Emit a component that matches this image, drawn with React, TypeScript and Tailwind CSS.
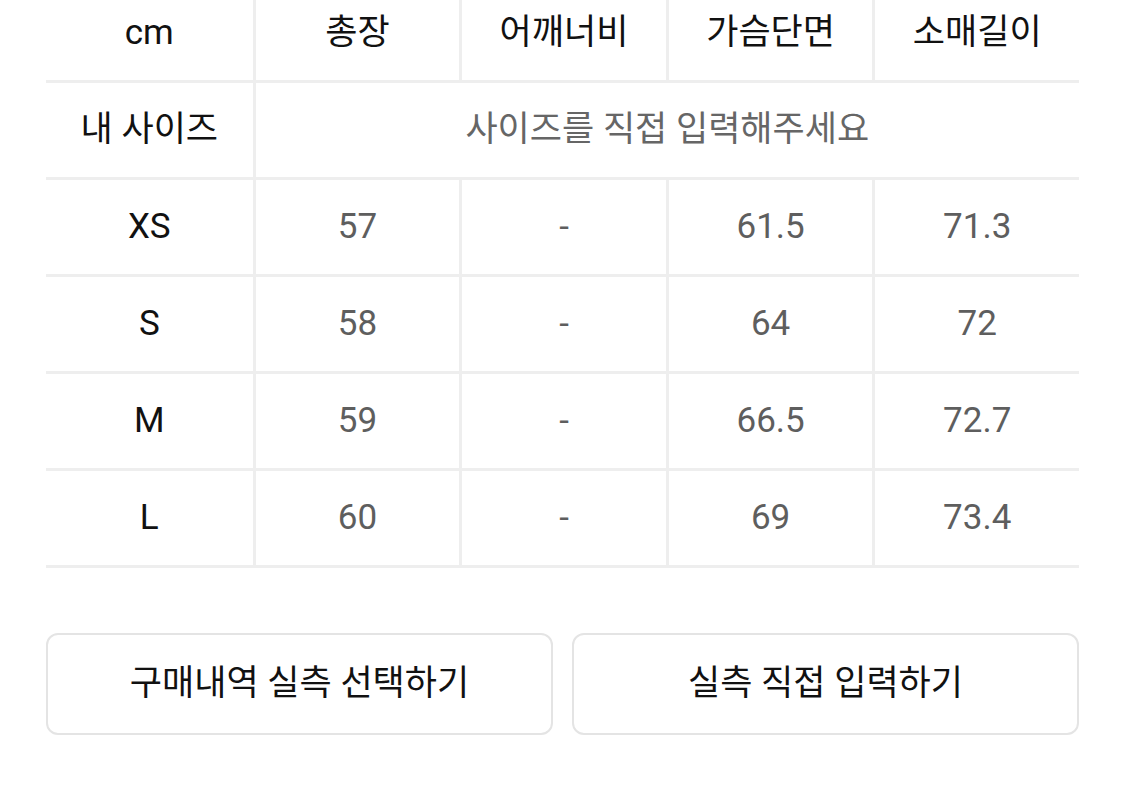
import React from "react";

const rows = [
  { size: "XS", values: ["57", "-", "61.5", "71.3"] },
  { size: "S", values: ["58", "-", "64", "72"] },
  { size: "M", values: ["59", "-", "66.5", "72.7"] },
  { size: "L", values: ["60", "-", "69", "73.4"] },
];

const headers = ["총장", "어깨너비", "가슴단면", "소매길이"];

export default function App() {
  return (
    <div
      className="w-[1125px] h-[793px] overflow-hidden bg-white"
      style={{ fontFamily: '"Roboto", "Noto Sans CJK KR", sans-serif' }}
    >
      <div className="mx-[46px] -mt-[14px]">
        {/* Size table */}
        <div className="grid grid-cols-5">
          {/* Header */}
          <div className="h-[97px] flex items-center justify-center border-b-[3px] border-[#eeeeee] text-[35px] text-[#111111]">
            cm
          </div>
          {headers.map((h) => (
            <div
              key={h}
              className="h-[97px] flex items-center justify-center border-b-[3px] border-l-[3px] border-[#eeeeee] text-[35px] text-[#111111]"
            >
              {h}
            </div>
          ))}

          {/* My size */}
          <div className="h-[97px] flex items-center justify-center border-b-[3px] border-[#eeeeee] text-[35px] text-[#111111]">
            내 사이즈
          </div>
          <div className="col-span-4 h-[97px] flex items-center justify-center border-b-[3px] border-l-[3px] border-[#eeeeee] text-[35px] text-[#666666]">
            사이즈를 직접 입력해주세요
          </div>

          {/* Rows */}
          {rows.map((r) => (
            <React.Fragment key={r.size}>
              <div className="h-[97px] flex items-center justify-center border-b-[3px] border-[#eeeeee] text-[35px] text-[#111111]">
                {r.size}
              </div>
              {r.values.map((v, i) => (
                <div
                  key={i}
                  className="h-[97px] flex items-center justify-center border-b-[3px] border-l-[3px] border-[#eeeeee] text-[35px] text-[#5e5e5e]"
                >
                  {v}
                </div>
              ))}
            </React.Fragment>
          ))}
        </div>

        {/* Buttons */}
        <div className="mt-[65px] flex gap-[19px]">
          <button className="flex-1 h-[102px] rounded-[12px] border-2 border-[#e4e4e4] bg-white text-[35px] text-[#111111]">
            구매내역 실측 선택하기
          </button>
          <button className="flex-1 h-[102px] rounded-[12px] border-2 border-[#e4e4e4] bg-white text-[35px] text-[#111111]">
            실측 직접 입력하기
          </button>
        </div>
      </div>
    </div>
  );
}
